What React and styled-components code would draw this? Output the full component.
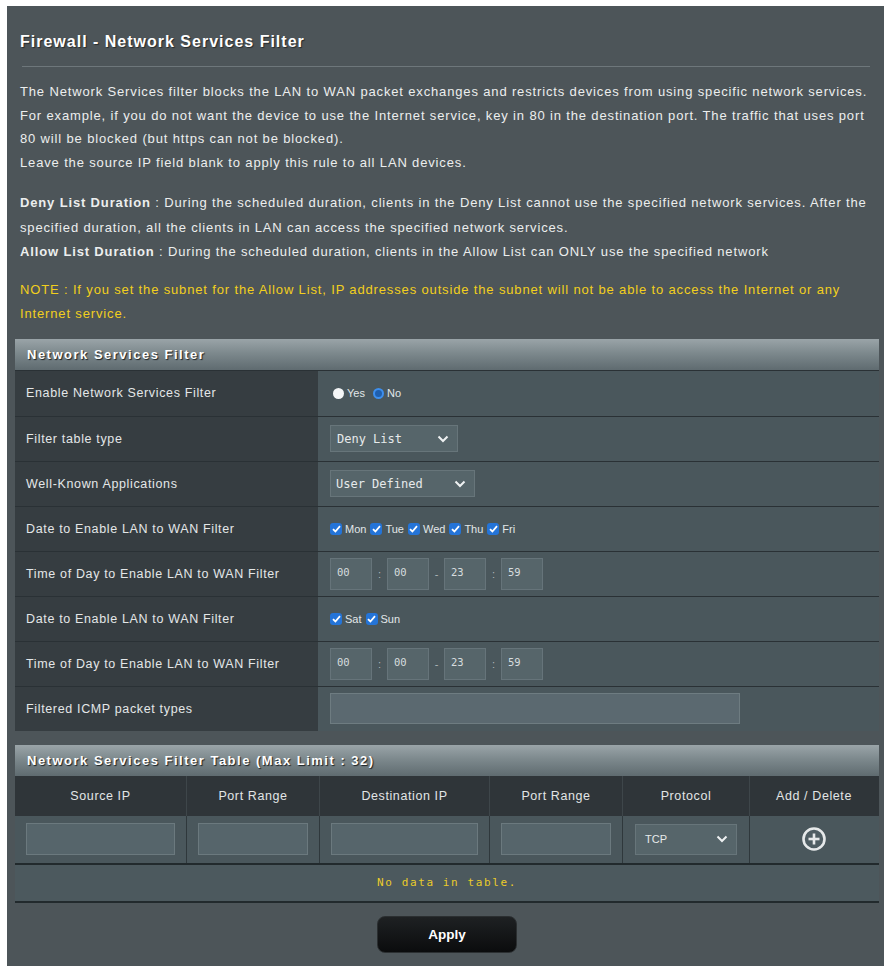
import React from 'react';
import styled, { createGlobalStyle } from 'styled-components';

const GlobalStyle = createGlobalStyle`
  html, body {
    margin: 0;
    padding: 0;
    background: #fff;
  }
  body {
    font-family: "Liberation Sans", Arial, sans-serif;
  }
`;

const Page = styled.div`
  padding: 6px 0 0 7px;
`;

const Panel = styled.div`
  width: 877px;
  height: 960px;
  box-sizing: border-box;
  background: #4d5559;
  padding: 26px 5px 13px 8px;
  display: flex;
  flex-direction: column;
`;

const Title = styled.h1`
  margin: 0 0 0 5px;
  font-size: 16px;
  line-height: 20px;
  letter-spacing: 1px;
  font-weight: bold;
  color: #fff;
  text-shadow: 1px 1px 1px rgba(0, 0, 0, 0.5);
`;

const Divider = styled.div`
  height: 1px;
  background: #6e777b;
  margin: 14px 9px 0 7px;
`;

const Para = styled.div`
  margin: ${p => p.top}px 0 0 5px;
  font-size: 13px;
  letter-spacing: 0.85px;
  line-height: ${p => p.lh || 23.6}px;
  color: ${p => (p.note ? '#f2cf1d' : '#eceeee')};
`;

const Line = styled.span`
  display: block;
  white-space: nowrap;
`;

const Strong = styled.b`
  font-weight: bold;
`;

const SectionHead = styled.div`
  height: 31px;
  box-sizing: border-box;
  margin-top: ${p => p.top}px;
  padding-left: 12px;
  display: flex;
  align-items: center;
  background: linear-gradient(to bottom, #9aa4a8 0%, #7d898d 45%, #5f6b70 100%);
  color: #fff;
  font-size: 13px;
  font-weight: bold;
  letter-spacing: 1.5px;
  text-shadow: 1px 1px 1px #1b2023;
`;

const FormRow = styled.div`
  display: grid;
  grid-template-columns: 303px 1fr;
  height: ${p => p.h || 45}px;
  border-top: 1px solid #2a3135;
  box-sizing: border-box;
`;

const Label = styled.div`
  background: #363d41;
  color: #e4e7e8;
  font-size: 12.5px;
  letter-spacing: 0.65px;
  padding-left: 11px;
  display: flex;
  align-items: center;
`;

const Value = styled.div`
  background: #4a575c;
  padding-left: 12px;
  display: flex;
  align-items: center;
  color: #e2e7e9;
  font-size: 11px;
`;

const Radio = styled.span`
  width: 11px;
  height: 11px;
  border-radius: 50%;
  box-sizing: border-box;
  margin: 0 3px 0 3px;
  background: ${p => (p.checked ? '#1f5fae' : '#f4f6f7')};
  border: ${p => (p.checked ? '2px solid #3d8fee' : 'none')};
`;

const Choice = styled.span`
  margin-right: 5px;
`;

const Select = styled.div`
  width: ${p => p.w}px;
  height: ${p => p.h || 27}px;
  box-sizing: border-box;
  background: #56656a;
  border: 1px solid #67757a;
  display: flex;
  align-items: center;
  justify-content: space-between;
  padding: 0 8px 0 ${p => p.pl || 6}px;
  color: #e6eaeb;
  font-family: ${p => (p.mono ? '"DejaVu Sans Mono", "Liberation Mono", monospace' : '"Liberation Sans", Arial, sans-serif')};
  font-size: ${p => p.fs || 12}px;
`;

const Check = styled.span`
  width: 12px;
  height: 12px;
  border-radius: 3px;
  background: #2474d8;
  display: inline-flex;
  align-items: center;
  justify-content: center;
  margin: 0 3px 0 ${p => (p.first ? 0 : 4)}px;
`;

const TimeBox = styled.div`
  width: 42px;
  height: 32px;
  box-sizing: border-box;
  background: #56656a;
  border: 1px solid #66747a;
  color: #d7dddf;
  font-family: "DejaVu Sans Mono", monospace;
  font-size: 10.5px;
  padding: 7px 0 0 6px;
`;

const TimeSep = styled.span`
  width: 15px;
  text-align: center;
  color: #aeb6b9;
  font-size: 11px;
`;

const WideInput = styled.div`
  width: 410px;
  height: 31px;
  box-sizing: border-box;
  background: #5b6970;
  border: 1px solid #6e7c81;
`;

const RuleGrid = styled.div`
  display: grid;
  grid-template-columns: 172px 133px 170px 133px 127px 1fr;
`;

const HeadCell = styled.div`
  height: 40px;
  background: #2f3539;
  border-right: 1px solid ${p => (p.last ? 'transparent' : '#3e464a')};
  color: #e2e5e6;
  font-size: 12.5px;
  letter-spacing: 0.6px;
  display: flex;
  align-items: center;
  justify-content: center;
`;

const InputCell = styled.div`
  height: 47px;
  background: #4a575c;
  border-right: 1px solid ${p => (p.last ? 'transparent' : '#2f383c')};
  display: flex;
  align-items: center;
  justify-content: center;
`;

const CellInput = styled.div`
  width: calc(100% - 22px);
  height: 32px;
  box-sizing: border-box;
  background: #56656b;
  border: 1px solid #6b797e;
`;

const EmptyRow = styled.div`
  height: 40px;
  box-sizing: border-box;
  background: #4c595e;
  border-top: 2px solid #222a2d;
  border-bottom: 2px solid #222a2d;
  display: flex;
  align-items: center;
  justify-content: center;
  color: #eacb2a;
  font-family: "DejaVu Sans Mono", monospace;
  font-size: 11px;
  letter-spacing: 1.6px;
`;

const ButtonBar = styled.div`
  display: flex;
  justify-content: center;
  margin-top: 13px;
`;

const ApplyButton = styled.button`
  width: 140px;
  height: 37px;
  border-radius: 8px;
  border: 1px solid #2b2f31;
  background: linear-gradient(to bottom, #1e2123 0%, #0b0c0d 100%);
  color: #fff;
  font-family: "Liberation Sans", Arial, sans-serif;
  font-size: 13.5px;
  font-weight: bold;
`;

const Chevron = () => (
  <svg width="12" height="8" viewBox="0 0 12 8">
    <polyline points="1.5,1.5 6,6 10.5,1.5" fill="none" stroke="#eef1f2" strokeWidth="2" />
  </svg>
);

const Tick = () => (
  <svg width="9" height="8" viewBox="0 0 9 8">
    <polyline points="1,4.2 3.4,6.5 8,1.2" fill="none" stroke="#fff" strokeWidth="1.8" />
  </svg>
);

const AddIcon = () => (
  <svg width="26" height="26" viewBox="0 0 26 26">
    <circle cx="13" cy="13" r="10.5" fill="#4f5d63" stroke="#e6e9ea" strokeWidth="2.6" />
    <line x1="13" y1="7.5" x2="13" y2="18.5" stroke="#e6e9ea" strokeWidth="2.6" />
    <line x1="7.5" y1="13" x2="18.5" y2="13" stroke="#e6e9ea" strokeWidth="2.6" />
  </svg>
);

const TimeRange = ({ values }) => (
  <>
    <TimeBox>{values[0]}</TimeBox>
    <TimeSep>:</TimeSep>
    <TimeBox>{values[1]}</TimeBox>
    <TimeSep>-</TimeSep>
    <TimeBox>{values[2]}</TimeBox>
    <TimeSep>:</TimeSep>
    <TimeBox>{values[3]}</TimeBox>
  </>
);

const Days = ({ days }) => (
  <>
    {days.map((d, i) => (
      <React.Fragment key={d}>
        <Check first={i === 0}>
          <Tick />
        </Check>
        <span>{d}</span>
      </React.Fragment>
    ))}
  </>
);

const columns = ['Source IP', 'Port Range', 'Destination IP', 'Port Range', 'Protocol', 'Add / Delete'];

export default function App() {
  return (
    <>
      <GlobalStyle />
      <Page>
        <Panel>
          <Title>Firewall - Network Services Filter</Title>
          <Divider />
          <Para top={13}>
            <Line>The Network Services filter blocks the LAN to WAN packet exchanges and restricts devices from using specific network services.</Line>
            <Line>For example, if you do not want the device to use the Internet service, key in 80 in the destination port. The traffic that uses port</Line>
            <Line>80 will be blocked (but https can not be blocked).</Line>
            <Line>Leave the source IP field blank to apply this rule to all LAN devices.</Line>
          </Para>
          <Para top={17} lh={24.5}>
            <Line>
              <Strong>Deny List Duration</Strong> : During the scheduled duration, clients in the Deny List cannot use the specified network services. After the
            </Line>
            <Line>specified duration, all the clients in LAN can access the specified network services.</Line>
            <Line>
              <Strong>Allow List Duration</Strong> : During the scheduled duration, clients in the Allow List can ONLY use the specified network
            </Line>
          </Para>
          <Para top={13} lh={24} note>
            <Line>NOTE : If you set the subnet for the Allow List, IP addresses outside the subnet will not be able to access the Internet or any</Line>
            <Line>Internet service.</Line>
          </Para>

          <SectionHead top={13}>Network Services Filter</SectionHead>
          <FormRow h={46}>
            <Label>Enable Network Services Filter</Label>
            <Value>
              <Radio />
              <Choice>Yes</Choice>
              <Radio checked />
              <Choice>No</Choice>
            </Value>
          </FormRow>
          <FormRow>
            <Label>Filter table type</Label>
            <Value>
              <Select w={128} mono>
                <span>Deny List</span>
                <Chevron />
              </Select>
            </Value>
          </FormRow>
          <FormRow>
            <Label>Well-Known Applications</Label>
            <Value>
              <Select w={145} mono pl={5}>
                <span>User Defined</span>
                <Chevron />
              </Select>
            </Value>
          </FormRow>
          <FormRow>
            <Label>Date to Enable LAN to WAN Filter</Label>
            <Value>
              <Days days={['Mon', 'Tue', 'Wed', 'Thu', 'Fri']} />
            </Value>
          </FormRow>
          <FormRow>
            <Label>Time of Day to Enable LAN to WAN Filter</Label>
            <Value>
              <TimeRange values={['00', '00', '23', '59']} />
            </Value>
          </FormRow>
          <FormRow>
            <Label>Date to Enable LAN to WAN Filter</Label>
            <Value>
              <Days days={['Sat', 'Sun']} />
            </Value>
          </FormRow>
          <FormRow>
            <Label>Time of Day to Enable LAN to WAN Filter</Label>
            <Value>
              <TimeRange values={['00', '00', '23', '59']} />
            </Value>
          </FormRow>
          <FormRow>
            <Label>Filtered ICMP packet types</Label>
            <Value>
              <WideInput />
            </Value>
          </FormRow>

          <SectionHead top={14}>Network Services Filter Table (Max Limit : 32)</SectionHead>
          <RuleGrid>
            {columns.map((c, i) => (
              <HeadCell key={i} last={i === columns.length - 1}>{c}</HeadCell>
            ))}
            <InputCell><CellInput /></InputCell>
            <InputCell><CellInput /></InputCell>
            <InputCell><CellInput /></InputCell>
            <InputCell><CellInput /></InputCell>
            <InputCell>
              <Select w={102} h={31} fs={11} pl={9}>
                <span>TCP</span>
                <Chevron />
              </Select>
            </InputCell>
            <InputCell last>
              <AddIcon />
            </InputCell>
          </RuleGrid>
          <EmptyRow>No data in table.</EmptyRow>

          <ButtonBar>
            <ApplyButton>Apply</ApplyButton>
          </ButtonBar>
        </Panel>
      </Page>
    </>
  );
}
